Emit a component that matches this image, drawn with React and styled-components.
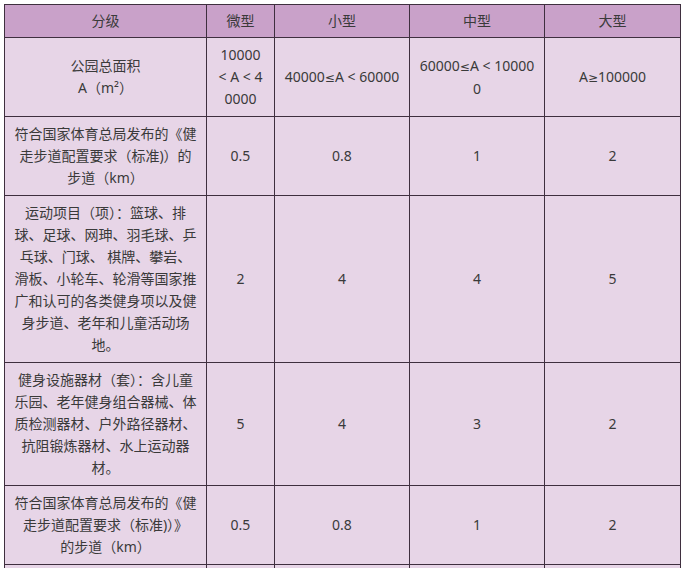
import styled, { createGlobalStyle } from "styled-components";

const GlobalStyle = createGlobalStyle`
  html, body {
    margin: 0;
    padding: 0;
    background: #ffffff;
  }
  body {
    padding: 4px;
    font-family: "Noto Sans", "Noto Sans CJK SC", sans-serif;
  }
`;

const Table = styled.table`
  width: 676px;
  table-layout: fixed;
  border-collapse: collapse;
  font-size: 14px;
  line-height: 22px;
  color: #3a3a3a;
`;

const HeadCell = styled.th`
  background: #c9a1c9;
  border: 1px solid #3f2f3f;
  padding: 5px 8px;
  font-weight: 400;
  text-align: center;
  vertical-align: middle;
`;

const Cell = styled.td`
  background: #e7d5e7;
  border: 1px solid #3f2f3f;
  padding: 6px ${(p) => (p.$tight ? "4px" : "8px")};
  height: ${(p) => (p.$blank ? "64px" : "auto")};
  text-align: center;
  vertical-align: middle;
  white-space: nowrap;
`;

const Sym = styled.span`
  font-family: "DejaVu Sans", sans-serif;
  font-size: 12px;
`;

const columns = [
  { label: "分级", width: 202 },
  { label: "微型", width: 68 },
  { label: "小型", width: 135 },
  { label: "中型", width: 135 },
  { label: "大型", width: 136 },
];

const le = <Sym>≤</Sym>;
const ge = <Sym>≥</Sym>;

const rows = [
  [
    ["公园总面积", "A（m²）"],
    ["10000", "< A < 4", "0000"],
    [<>40000{le}A &lt; 60000</>],
    [<>60000{le}A &lt; 10000</>, "0"],
    [<>A{ge}100000</>],
  ],
  [
    ["符合国家体育总局发布的《健", "走步道配置要求（标准)）的", "步道（km）"],
    ["0.5"],
    ["0.8"],
    ["1"],
    ["2"],
  ],
  [
    [
      "运动项目（项）：篮球、排",
      "球、足球、网珅、羽毛球、乒",
      "乓球、门球、 棋牌、攀岩、",
      "滑板、小轮车、轮滑等国家推",
      "广和认可的各类健身项以及健",
      "身步道、老年和儿童活动场",
      "地。",
    ],
    ["2"],
    ["4"],
    ["4"],
    ["5"],
  ],
  [
    [
      "健身设施器材（套）：含儿童",
      "乐园、老年健身组合器械、体",
      "质检测器材、户外路径器材、",
      "抗阻锻炼器材、水上运动器",
      "材。",
    ],
    ["5"],
    ["4"],
    ["3"],
    ["2"],
  ],
  [
    ["符合国家体育总局发布的《健", "走步道配置要求（标准)）》", "的步道（km）"],
    ["0.5"],
    ["0.8"],
    ["1"],
    ["2"],
  ],
];

function Lines({ lines }) {
  return lines.map((line, i) => (
    <span key={i}>
      {i > 0 && <br />}
      {line}
    </span>
  ));
}

export default function App() {
  return (
    <>
      <GlobalStyle />
      <Table>
        <colgroup>
          {columns.map((c) => (
            <col key={c.label} style={{ width: c.width }} />
          ))}
        </colgroup>
        <thead>
          <tr>
            {columns.map((c) => (
              <HeadCell key={c.label}>{c.label}</HeadCell>
            ))}
          </tr>
        </thead>
        <tbody>
          {rows.map((row, r) => (
            <tr key={r}>
              {row.map((lines, c) => (
                <Cell key={c} $tight={c === 1}>
                  <Lines lines={lines} />
                </Cell>
              ))}
            </tr>
          ))}
          <tr>
            {columns.map((c) => (
              <Cell key={c.label} $blank />
            ))}
          </tr>
        </tbody>
      </Table>
    </>
  );
}
